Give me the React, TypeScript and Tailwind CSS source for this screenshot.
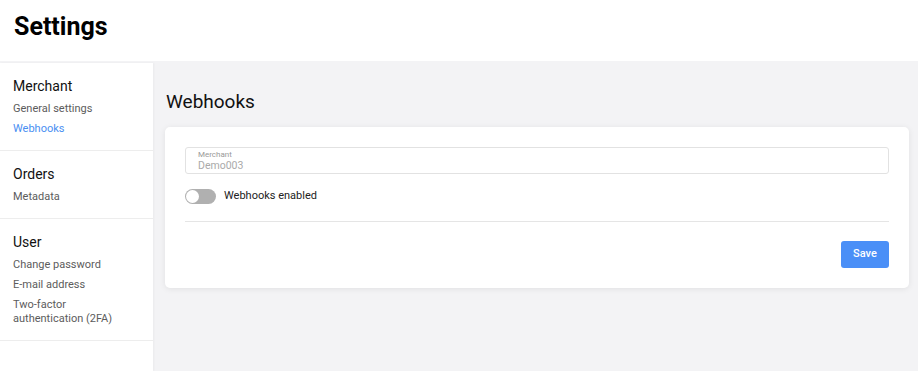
import { useState } from "react";

const sections = [
  { title: "Merchant", links: ["General settings", "Webhooks"] },
  { title: "Orders", links: ["Metadata"] },
  { title: "User", links: ["Change password", "E-mail address", "Two-factor authentication (2FA)"] },
];

export default function App() {
  const [enabled, setEnabled] = useState(false);

  return (
    <div className="flex h-[371px] flex-col bg-[#f3f3f5] font-['Roboto',sans-serif]">
      <header className="h-[61px] shrink-0 bg-white px-[14px] pt-[12px]">
        <h1 className="text-[25px] font-bold leading-[30px] text-black">Settings</h1>
      </header>

      <div className="mt-[2px] flex flex-1">
        <aside className="w-[153px] shrink-0 bg-white shadow-[1px_0_2px_rgba(0,0,0,0.04)]">
          {sections.map((section) => (
            <div key={section.title} className="border-b border-[#ededed] pb-[14px] pl-[13px] pr-[28px] pt-[14px]">
              <p className="text-[14px] leading-[18px] text-[#111]">{section.title}</p>
              <ul className="mt-[7px] space-y-[6px]">
                {section.links.map((link) => (
                  <li
                    key={link}
                    className={`text-[11px] leading-[14px] ${
                      link === "Webhooks" ? "text-[#4a8ff2]" : "text-[#5c5c5c]"
                    }`}
                  >
                    {link}
                  </li>
                ))}
              </ul>
            </div>
          ))}
        </aside>

        <main className="flex-1 pl-[12px] pr-[9px] pt-[28px]">
          <h2 className="mb-[14px] pl-px text-[19px] leading-[22px] text-[#111]">Webhooks</h2>

          <div className="rounded-[5px] bg-white px-[20px] pb-[20px] pt-[20px] shadow-[0_1px_6px_rgba(0,0,0,0.08)]">
            <div className="h-[27px] rounded-[3px] border border-[#e2e2e2] px-[12px] pt-[2px]">
              <p className="text-[8px] leading-[9px] text-[#999]">Merchant</p>
              <p className="text-[10.5px] leading-[13px] text-[#aaa]">Demo003</p>
            </div>

            <div className="mt-[14px] flex items-center gap-[8px]">
              <button
                onClick={() => setEnabled(!enabled)}
                className={`flex h-[15px] w-[31px] items-center rounded-full px-[1px] ${
                  enabled ? "justify-end bg-[#4a8ff2]" : "justify-start bg-[#b0b0b0]"
                }`}
              >
                <span className="h-[13px] w-[13px] rounded-full bg-white" />
              </button>
              <span className="text-[11px] leading-[16px] text-[#222]">Webhooks enabled</span>
            </div>

            <div className="mt-[17px] border-t border-[#e5e5e5]" />

            <div className="mt-[19px] flex justify-end">
              <button className="h-[27px] w-[48px] rounded-[3px] bg-[#4a8ff7] text-[11px] font-medium text-white">
                Save
              </button>
            </div>
          </div>
        </main>
      </div>
    </div>
  );
}
